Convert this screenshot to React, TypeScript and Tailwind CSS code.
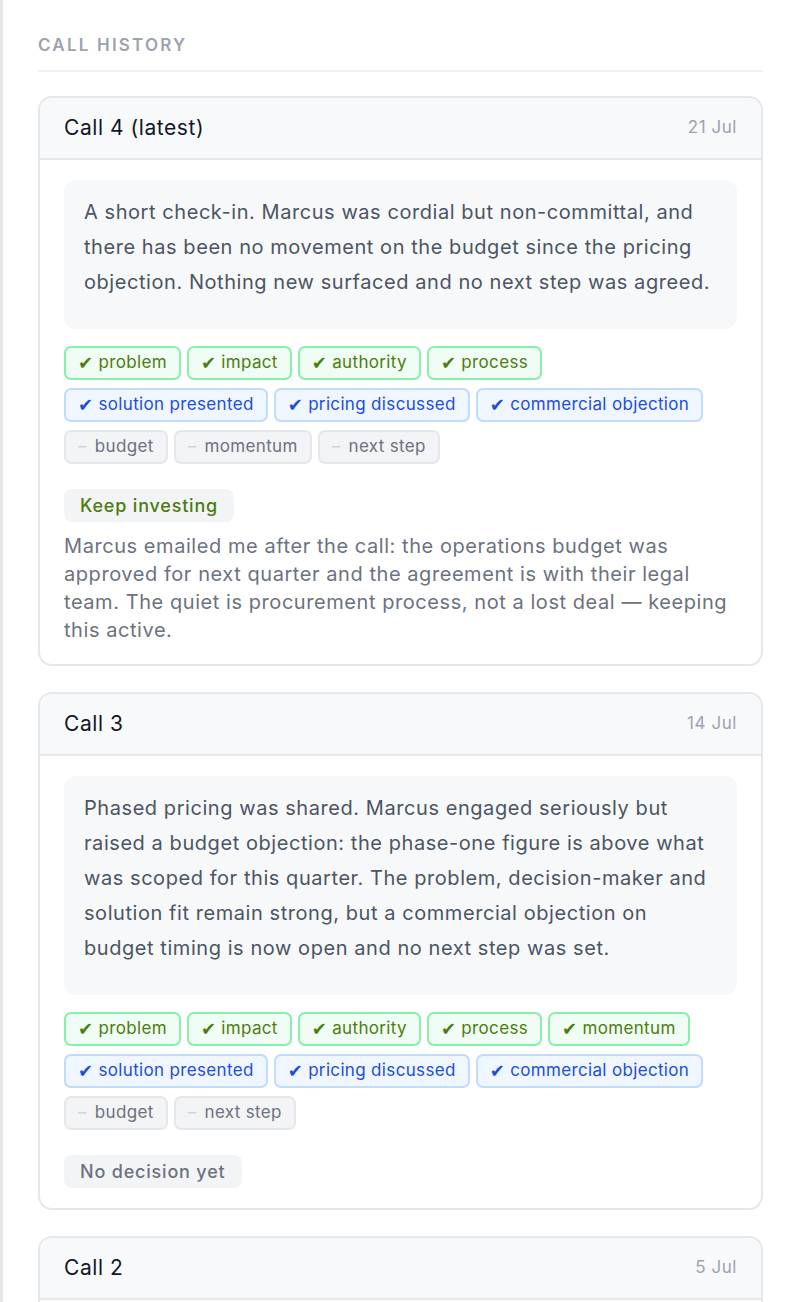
import React from 'react';

type Tag = { label: string; kind: 'green' | 'blue' | 'gray' };

type Call = {
  title: string;
  date: string;
  summary: string;
  tags: Tag[];
  decision?: { label: string; tone: 'green' | 'gray' };
  note?: string;
};

const g = (label: string): Tag => ({ label, kind: 'green' });
const b = (label: string): Tag => ({ label, kind: 'blue' });
const n = (label: string): Tag => ({ label, kind: 'gray' });

const calls: Call[] = [
  {
    title: 'Call 4 (latest)',
    date: '21 Jul',
    summary:
      'A short check-in. Marcus was cordial but non-committal, and there has been no movement on the budget since the pricing objection. Nothing new surfaced and no next step was agreed.',
    tags: [
      g('problem'), g('impact'), g('authority'), g('process'),
      b('solution presented'), b('pricing discussed'), b('commercial objection'),
      n('budget'), n('momentum'), n('next step'),
    ],
    decision: { label: 'Keep investing', tone: 'green' },
    note:
      'Marcus emailed me after the call: the operations budget was approved for next quarter and the agreement is with their legal team. The quiet is procurement process, not a lost deal — keeping this active.',
  },
  {
    title: 'Call 3',
    date: '14 Jul',
    summary:
      'Phased pricing was shared. Marcus engaged seriously but raised a budget objection: the phase-one figure is above what was scoped for this quarter. The problem, decision-maker and solution fit remain strong, but a commercial objection on budget timing is now open and no next step was set.',
    tags: [
      g('problem'), g('impact'), g('authority'), g('process'), g('momentum'),
      b('solution presented'), b('pricing discussed'), b('commercial objection'),
      n('budget'), n('next step'),
    ],
    decision: { label: 'No decision yet', tone: 'gray' },
  },
  {
    title: 'Call 2',
    date: '5 Jul',
    summary:
      'Discovery continued with the operations lead. The team confirmed the current process is manual and slow, and Marcus is the person who signs off on new tooling.',
    tags: [g('problem'), g('impact'), g('authority'), n('budget'), n('next step')],
  },
];

function TagPill({ tag }: { tag: Tag }) {
  if (tag.kind === 'gray') {
    return (
      <span className="inline-flex h-[34px] items-center gap-[8px] rounded-[7px] border-2 border-[#e5e7eb] bg-[#f3f4f6] px-[12px] text-[17px] tracking-[0.02em] text-[#6b7280]">
        <span className="text-[#d1d5db]">–</span>
        {tag.label}
      </span>
    );
  }
  const cls =
    tag.kind === 'green'
      ? 'border-[#86efac] bg-[#f0fdf4] text-[#4d7c0f]'
      : 'border-[#bfdbfe] bg-[#eff6ff] text-[#1d4ed8]';
  return (
    <span className={`inline-flex h-[34px] items-center gap-[5px] rounded-[7px] border-2 px-[12px] text-[17px] tracking-[0.02em] ${cls}`}>
      <span className="font-['DejaVu_Sans',sans-serif] text-[18px] leading-none">✔</span>
      {tag.label}
    </span>
  );
}

function CallCard({ call }: { call: Call }) {
  const groups = ['green', 'blue', 'gray'] as const;
  return (
    <div className="overflow-hidden rounded-[14px] border-2 border-[#e5e7eb] bg-white">
      <div className="flex h-[62px] items-center justify-between border-b-2 border-[#e5e7eb] bg-[#f8f9fb] px-[24px]">
        <span className="text-[21px] text-[#111827]">{call.title}</span>
        <span className="text-[17px] text-[#9ca3af]">{call.date}</span>
      </div>
      <div className="px-[24px] pt-[20px] pb-[20px]">
        <div className="rounded-[12px] bg-[#f7f8fa] px-[20px] pt-[15px] pb-[29px] text-[20px] leading-[35px] text-[#4b5563]">
          {call.summary}
        </div>
        <div className="mt-[17px] flex flex-col gap-[8px]">
          {groups.map((k) => {
            const items = call.tags.filter((t) => t.kind === k);
            if (!items.length) return null;
            return (
              <div key={k} className="flex flex-wrap gap-[6px]">
                {items.map((t) => (
                  <TagPill key={t.label} tag={t} />
                ))}
              </div>
            );
          })}
        </div>
        {call.decision && (
          <div className="mt-[25px]">
            <span
              className={`inline-flex h-[33px] items-center rounded-[8px] bg-[#f3f4f6] px-[16px] text-[18px] font-medium tracking-[0.045em] ${
                call.decision.tone === 'green' ? 'text-[#4d7c0f]' : 'text-[#6b7280]'
              }`}
            >
              {call.decision.label}
            </span>
          </div>
        )}
        {call.note && (
          <p className="mt-[10px] text-[20px] leading-[28px] text-[#6b7280]">{call.note}</p>
        )}
      </div>
    </div>
  );
}

export default function App() {
  return (
    <div className="h-[1302px] overflow-hidden border-l-[3px] border-[#e5e7eb] bg-white font-['Inter',sans-serif] tracking-[0.035em]">
      <div className="pl-[35px] pr-[37px] pt-[33px]">
        <h2 className="border-b-2 border-[#f0f1f3] pb-[11px] text-[17px] font-semibold uppercase tracking-[0.13em] text-[#9ca3af]">
          Call History
        </h2>
        <div className="mt-[24px] flex flex-col gap-[26px]">
          {calls.map((c) => (
            <CallCard key={c.title} call={c} />
          ))}
        </div>
      </div>
    </div>
  );
}
